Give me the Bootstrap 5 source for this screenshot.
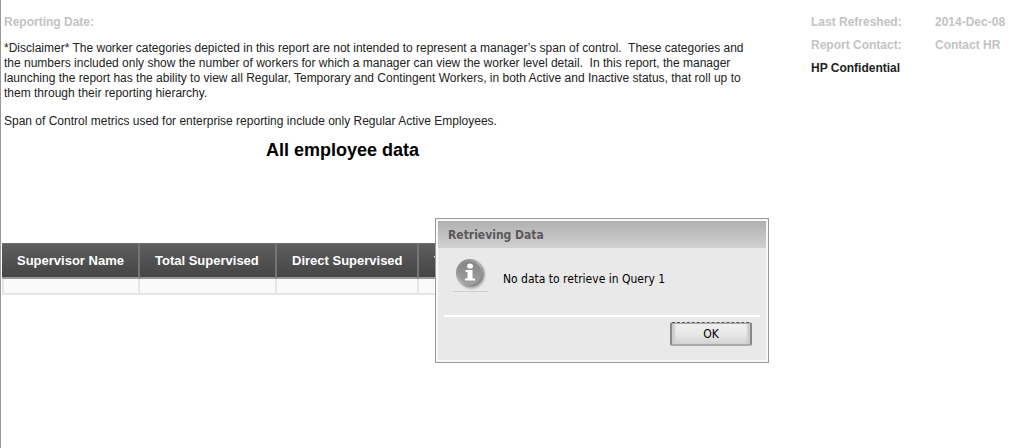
<!DOCTYPE html>
<html lang="en">
<head>
<meta charset="utf-8">
<meta name="viewport" content="width=device-width, initial-scale=1">
<title>All employee data</title>
<link href="https://cdn.jsdelivr.net/npm/bootstrap@5.3.0/dist/css/bootstrap.min.css" rel="stylesheet">
<style>
body{font-family:"Liberation Sans",Arial,sans-serif;font-size:12px;line-height:14px;color:#222;background:#fff;border-left:1px solid #999}
.report-main{max-width:756px;padding:15px 4px 0 3px}
.muted-label{color:#c3c3c3}
.report-main .muted-label{margin-bottom:12px}
.disclaimer{line-height:15px;margin-bottom:13px}
.report-meta{width:225px;padding-top:15px;display:grid;grid-template-columns:124px 1fr;row-gap:9px;align-content:start}
.report-title{font-size:18px;line-height:22px;color:#000;margin:11px 0 0 265px}
.report-table{width:466px;margin:82px 0 0 1px;table-layout:fixed;border-collapse:separate;border-spacing:0}
.report-table th{height:36px;padding:0 0 0 15px;font-size:13px;color:#fff;white-space:nowrap;vertical-align:middle;background:linear-gradient(#5e5e5e,#454545);border-top:1px solid #707070;border-right:2px solid #757575;border-bottom:2px solid #999}
.report-table td{height:16px;padding:0;background:#fafafa;border-right:2px solid #e6e6e6;border-bottom:2px solid #e6e6e6}
.report-table td:first-child{border-left:2px solid #e6e6e6}
.message-box{position:absolute;top:218px;left:435px;width:334px;padding:2px;background:#f8f8f8;border:1px solid #999;color:#000;font-family:"DejaVu Sans Condensed","DejaVu Sans",Tahoma,sans-serif;font-stretch:condensed;font-size:12px}
.message-title{height:27px;padding:2px 10px 0;font-size:12px;color:#595959;background:linear-gradient(#b0b0b0,#d1d1d1)}
.message-content{height:112px;background:#e9e9e9;padding:0 6px}
.message-text{height:69px;padding-left:9px;border-bottom:2px solid #fff}
.info-mark{width:36px;height:36px;margin-top:11px}
.message-text p{margin:24px 0 0 14px}
.ok-button{width:82px;height:24px;margin:5px 8px 0 0;padding:0;font-size:12px;line-height:18px;color:#000;background:linear-gradient(#f1f1f1,#e8e8e8 50%,#d4d4d4);border:2px solid #888;border-top:1px dashed #555;border-bottom-color:#aaa;border-radius:2px;box-shadow:inset 0 1px #aaa,inset 3px 0 2px #ccc,inset -3px 0 2px #ccc}
</style>
</head>
<body class="min-vh-100">
<header class="d-flex">
  <div class="report-main flex-grow-1">
    <div class="muted-label fw-bold">Reporting Date:</div>
    <p class="disclaimer">*Disclaimer* The worker categories depicted in this report are not intended to represent a manager’s span of control.&nbsp; These categories and the numbers included only show the number of workers for which a manager can view the worker level detail.&nbsp; In this report, the manager launching the report has the ability to view all Regular, Temporary and Contingent Workers, in both Active and Inactive status, that roll up to them through their reporting hierarchy.</p>
    <p class="mb-0">Span of Control metrics used for enterprise reporting include only Regular Active Employees.</p>
  </div>
  <div class="report-meta ms-auto fw-bold">
    <span class="muted-label">Last Refreshed:</span><span class="muted-label">2014-Dec-08</span>
    <span class="muted-label">Report Contact:</span><span class="muted-label">Contact HR</span>
    <span>HP Confidential</span>
  </div>
</header>
<main>
  <h1 class="report-title fw-bold">All employee data</h1>
  <table class="report-table">
    <colgroup><col style="width:138px"><col style="width:137px"><col style="width:142px"><col></colgroup>
    <thead><tr><th scope="col">Supervisor Name</th><th scope="col">Total Supervised</th><th scope="col">Direct Supervised</th><th scope="col">T</th></tr></thead>
    <tbody><tr><td></td><td></td><td></td><td></td></tr></tbody>
  </table>
</main>
<section class="message-box" role="dialog" aria-labelledby="messageTitle" aria-describedby="messageText">
  <h2 class="message-title d-flex align-items-center fw-bold mb-0" id="messageTitle">Retrieving Data</h2>
  <div class="message-content">
    <div class="message-text d-flex">
      <svg class="info-mark" viewBox="0 0 36 36" aria-hidden="true">
        <defs>
          <linearGradient id="rim" x1="0" y1="0" x2="1" y2="1"><stop offset="0" stop-color="#777"/><stop offset=".5" stop-color="#b5b5b5"/><stop offset="1" stop-color="#707070"/></linearGradient>
          <linearGradient id="face" x1="0" y1="0" x2="0" y2="1"><stop offset="0" stop-color="#858585"/><stop offset="1" stop-color="#a0a0a0"/></linearGradient>
          <filter id="shade" x="-20%" y="-20%" width="150%" height="150%"><feGaussianBlur stdDeviation="1"/></filter>
        </defs>
        <circle cx="18.500" cy="16" r="13.500" fill="#aaa" filter="url(#shade)"/>
        <circle cx="17" cy="14" r="14" fill="url(#rim)"/>
        <circle cx="17" cy="14" r="11.500" fill="url(#face)"/>
        <ellipse cx="17" cy="7" rx="3" ry="2.600" fill="#fff"/>
        <path d="M12.500 11h7v8.500h2.500v2H12v-2h2.500v-6.500h-2z" fill="#fff"/>
        <path d="M0 32.500h35" stroke="#d0d0d0"/>
      </svg>
      <p id="messageText">No data to retrieve in Query 1</p>
    </div>
    <div class="d-flex justify-content-end"><button type="button" class="ok-button">OK</button></div>
  </div>
</section>
<script src="https://cdn.jsdelivr.net/npm/bootstrap@5.3.0/dist/js/bootstrap.bundle.min.js"></script>
</body>
</html>
